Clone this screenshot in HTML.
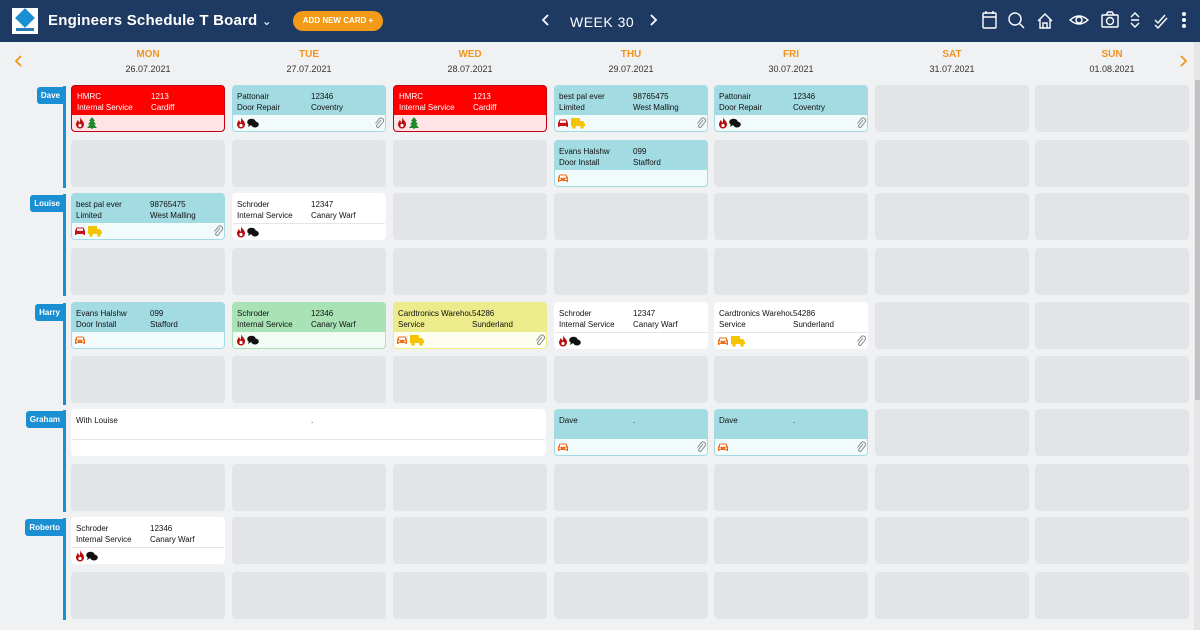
<!DOCTYPE html>
<html><head><meta charset="utf-8">
<style>
*{margin:0;padding:0;box-sizing:border-box}
body{width:1200px;height:630px;overflow:hidden;background:#f0f1f3;font-family:"Liberation Sans",sans-serif;position:relative}
.hdr{position:absolute;left:0;top:0;width:1200px;height:42px;background:#1f3a62}
.logo{position:absolute;left:12px;top:8px;width:26px;height:26px;background:#fff}
.title{position:absolute;left:48px;top:12px;color:#fff;font-weight:bold;font-size:15px;letter-spacing:.2px}
.add{position:absolute;left:293px;top:11px;width:90px;height:20px;border-radius:10px;background:#f39a16;color:#fff;font-size:8px;font-weight:bold;line-height:20px;text-align:center}
.week{position:absolute;left:570px;top:14px;color:#fff;font-size:14px;letter-spacing:.5px}
.day{position:absolute;top:49px;width:154px;text-align:center}
.day b{display:block;color:#f0941e;font-size:10px}
.day i{display:block;font-style:normal;color:#333;font-size:9px;margin-top:4px}
.cell{position:absolute;width:154px;height:47px;border-radius:4px;background:#e3e4e8}
.card{position:absolute;width:154px;height:47px;border-radius:4px;background:#fff;overflow:hidden;font-size:8px;color:#111}
.card .t{position:absolute;left:5px;top:6px;line-height:11px;width:74px;white-space:nowrap;overflow:hidden}
.card .n{position:absolute;left:79px;top:6px;line-height:11px}
.card .f{position:absolute;left:1px;right:1px;bottom:1px;height:16px;background:#fff;border-radius:0 0 3px 3px;border-top:1px solid #e5e5e5}
.red{background:#f00;color:#fff;border:1px solid #c40010}.red .t,.red .n{top:5px}.red .f{background:#ffe3e6;border:none;left:0;right:0;bottom:0}
.blue{background:#a3dbe3}.blue .f{background:#f2fbfc;border:none}
.green{background:#a9e3b5}.green .f{background:#f2fbf4;border:none}
.yel{background:#ecec8c}.yel .f{background:#fdfdf0;border:none}
.f svg{position:absolute;top:2px;width:12px;height:12px}
.tag{position:absolute;height:17px;background:#1a8fd3;color:#fff;font-size:8px;font-weight:bold;line-height:17px;border-radius:3px 0 0 3px;padding:0 4px;right:1136px}
.vl{position:absolute;left:63px;width:3px;background:#1a8fd3}
</style></head><body>
<svg width="0" height="0" style="position:absolute">
<defs>
<symbol id="fl" viewBox="0 0 12 12"><path d="M6 0C7 3 10 4 10 7.5A4 4 0 0 1 2 7.5C2 5.5 3.5 4.5 3.5 3C5 4 5 5 5 6C6 5 6.5 3 6 0Z" fill="#b80d0d"/><circle cx="6" cy="8.5" r="1.6" fill="#fff"/></symbol>
<symbol id="ch" viewBox="0 0 12 12"><ellipse cx="4.5" cy="5" rx="4.3" ry="3.3" fill="#111"/><ellipse cx="8" cy="7.5" rx="3.8" ry="3" fill="#111"/><path d="M2 7L1 10L4 8Z" fill="#111"/></symbol>
<symbol id="tr" viewBox="0 0 12 12"><path d="M6 0L9 4H7.5L10 7.5H8L11 11H1L4 7.5H2L4.5 4H3Z" fill="#1c8a2c"/><rect x="5.3" y="10" width="1.4" height="2" fill="#1c8a2c"/></symbol>
<symbol id="ca" viewBox="0 0 12 12"><path d="M1 6L2.5 2.5H9.5L11 6V10H9.5V9H2.5V10H1Z" fill="#f06b1c"/><rect x="3" y="3.5" width="6" height="2.3" fill="#fff"/><circle cx="3" cy="7.3" r=".9" fill="#fff"/><circle cx="9" cy="7.3" r=".9" fill="#fff"/></symbol>
<symbol id="car" viewBox="0 0 12 12"><path d="M1 6L2.5 2.5H9.5L11 6V10H9.5V9H2.5V10H1Z" fill="#c8111b"/><rect x="3" y="3.5" width="6" height="2.3" fill="#fff"/></symbol>
<symbol id="tk" viewBox="0 0 14 12"><rect x="0" y="1" width="9" height="8" fill="#f5c400"/><path d="M9 4H12L14 7V9H9Z" fill="#f5c400"/><circle cx="3" cy="10" r="1.7" fill="#f5c400"/><circle cx="11" cy="10" r="1.7" fill="#f5c400"/></symbol>
<symbol id="cl" viewBox="0 0 12 12"><path d="M8 3L4 8A1.3 1.3 0 0 0 6 10L10 5A2.5 2.5 0 0 0 6.5 1.5L2.5 6.5" fill="none" stroke="#888" stroke-width="1"/></symbol>
</defs></svg>

<div class="hdr">
<div class="logo"><svg width="26" height="26"><rect x="6" y="3" width="14" height="14" transform="rotate(45 13 10)" fill="#1a8fd3"/><rect x="4" y="20" width="18" height="3" fill="#2a7ab8"/></svg></div>
<div class="title">Engineers Schedule T Board <span style="font-weight:normal;font-size:12px">&#8964;</span></div>
<div class="add">ADD NEW CARD +</div>
<svg style="position:absolute;left:541px;top:13px" width="10" height="14"><path d="M7 2L2 7L7 12" fill="none" stroke="#fff" stroke-width="1.8"/></svg>
<div class="week">WEEK 30</div>
<svg style="position:absolute;left:648px;top:13px" width="10" height="14"><path d="M3 2L8 7L3 12" fill="none" stroke="#fff" stroke-width="1.8"/></svg>
<svg style="position:absolute;left:980px;top:10px" width="220" height="22" fill="none" stroke="#fff" stroke-width="1.4">
<rect x="3" y="3" width="13" height="15" rx="1"/><path d="M3 7H16M6 1V4M13 1V4"/>
<circle cx="35" cy="9" r="6"/><path d="M39.5 13.5L44 18"/>
<path d="M58 11L65 4L72 11M60 9V18H70V9M63 18V13H67V18"/>
<path d="M90 10Q99 2 108 10Q99 18 90 10Z"/><circle cx="99" cy="10" r="3"/>
<rect x="122" y="5" width="16" height="12" rx="1"/><circle cx="130" cy="11" r="3.5"/><path d="M126 5L128 2H132L134 5"/>
<path d="M151 7L155 3L159 7M151 13L155 17L159 13M151 10H159"/>
<path d="M175 10L178 13L185 5M175 15L178 18L187 8"/>
<circle cx="204" cy="4" r="1.3" fill="#fff"/><circle cx="204" cy="10" r="1.3" fill="#fff"/><circle cx="204" cy="16" r="1.3" fill="#fff"/>
</svg>
</div>

<svg style="position:absolute;left:14px;top:54px" width="10" height="14"><path d="M7 2L2 7L7 12" fill="none" stroke="#f0941e" stroke-width="1.8"/></svg>
<svg style="position:absolute;left:1178px;top:54px" width="10" height="14"><path d="M3 2L8 7L3 12" fill="none" stroke="#f0941e" stroke-width="1.8"/></svg>
<div style="position:absolute;left:1194px;top:42px;width:6px;height:588px;background:#e6e6e6"></div>
<div style="position:absolute;left:1195px;top:80px;width:5px;height:320px;background:#c1c1c1"></div>

<div class="day" style="left:71px"><b>MON</b><i>26.07.2021</i></div>
<div class="day" style="left:232px"><b>TUE</b><i>27.07.2021</i></div>
<div class="day" style="left:393px"><b>WED</b><i>28.07.2021</i></div>
<div class="day" style="left:554px"><b>THU</b><i>29.07.2021</i></div>
<div class="day" style="left:714px"><b>FRI</b><i>30.07.2021</i></div>
<div class="day" style="left:875px"><b>SAT</b><i>31.07.2021</i></div>
<div class="day" style="left:1035px"><b>SUN</b><i>01.08.2021</i></div>

<div>
<div class="cell" style="left:71px;top:140px"></div><div class="cell" style="left:232px;top:140px"></div><div class="cell" style="left:393px;top:140px"></div><div class="cell" style="left:714px;top:140px"></div><div class="cell" style="left:875px;top:140px"></div><div class="cell" style="left:1035px;top:140px"></div>
<div class="cell" style="left:875px;top:85px"></div><div class="cell" style="left:1035px;top:85px"></div>
<div class="cell" style="left:393px;top:193px"></div><div class="cell" style="left:554px;top:193px"></div><div class="cell" style="left:714px;top:193px"></div><div class="cell" style="left:875px;top:193px"></div><div class="cell" style="left:1035px;top:193px"></div>
<div class="cell" style="left:71px;top:248px"></div><div class="cell" style="left:232px;top:248px"></div><div class="cell" style="left:393px;top:248px"></div><div class="cell" style="left:554px;top:248px"></div><div class="cell" style="left:714px;top:248px"></div><div class="cell" style="left:875px;top:248px"></div><div class="cell" style="left:1035px;top:248px"></div>
<div class="cell" style="left:875px;top:302px"></div><div class="cell" style="left:1035px;top:302px"></div>
<div class="cell" style="left:71px;top:356px"></div><div class="cell" style="left:232px;top:356px"></div><div class="cell" style="left:393px;top:356px"></div><div class="cell" style="left:554px;top:356px"></div><div class="cell" style="left:714px;top:356px"></div><div class="cell" style="left:875px;top:356px"></div><div class="cell" style="left:1035px;top:356px"></div>
<div class="cell" style="left:875px;top:409px"></div><div class="cell" style="left:1035px;top:409px"></div>
<div class="cell" style="left:71px;top:464px"></div><div class="cell" style="left:232px;top:464px"></div><div class="cell" style="left:393px;top:464px"></div><div class="cell" style="left:554px;top:464px"></div><div class="cell" style="left:714px;top:464px"></div><div class="cell" style="left:875px;top:464px"></div><div class="cell" style="left:1035px;top:464px"></div>
<div class="cell" style="left:232px;top:517px"></div><div class="cell" style="left:393px;top:517px"></div><div class="cell" style="left:554px;top:517px"></div><div class="cell" style="left:714px;top:517px"></div><div class="cell" style="left:875px;top:517px"></div><div class="cell" style="left:1035px;top:517px"></div>
<div class="cell" style="left:71px;top:572px"></div><div class="cell" style="left:232px;top:572px"></div><div class="cell" style="left:393px;top:572px"></div><div class="cell" style="left:554px;top:572px"></div><div class="cell" style="left:714px;top:572px"></div><div class="cell" style="left:875px;top:572px"></div><div class="cell" style="left:1035px;top:572px"></div>
</div>

<div class="vl" style="top:86px;height:102px"></div><div class="tag" style="top:87px">Dave</div>
<div class="vl" style="top:194px;height:102px"></div><div class="tag" style="top:195px">Louise</div>
<div class="vl" style="top:303px;height:102px"></div><div class="tag" style="top:304px">Harry</div>
<div class="vl" style="top:410px;height:102px"></div><div class="tag" style="top:411px">Graham</div>
<div class="vl" style="top:518px;height:102px"></div><div class="tag" style="top:519px">Roberto</div>

<div class="card red" style="left:71px;top:85px"><div class="t">HMRC<br>Internal Service</div><div class="n">1213<br>Cardiff</div><div class="f"><svg style="left:2px"><use href="#fl"/></svg><svg style="left:14px"><use href="#tr"/></svg></div></div>
<div class="card blue" style="left:232px;top:85px"><div class="t">Pattonair<br>Door Repair</div><div class="n">12346<br>Coventry</div><div class="f"><svg style="left:2px"><use href="#fl"/></svg><svg style="left:14px"><use href="#ch"/></svg><svg style="left:140px"><use href="#cl"/></svg></div></div>
<div class="card red" style="left:393px;top:85px"><div class="t">HMRC<br>Internal Service</div><div class="n">1213<br>Cardiff</div><div class="f"><svg style="left:2px"><use href="#fl"/></svg><svg style="left:14px"><use href="#tr"/></svg></div></div>
<div class="card blue" style="left:554px;top:85px"><div class="t">best pal ever<br>Limited</div><div class="n">98765475<br>West Malling</div><div class="f"><svg style="left:2px"><use href="#car"/></svg><svg style="left:16px;width:14px"><use href="#tk"/></svg><svg style="left:140px"><use href="#cl"/></svg></div></div>
<div class="card blue" style="left:714px;top:85px"><div class="t">Pattonair<br>Door Repair</div><div class="n">12346<br>Coventry</div><div class="f"><svg style="left:2px"><use href="#fl"/></svg><svg style="left:14px"><use href="#ch"/></svg><svg style="left:140px"><use href="#cl"/></svg></div></div>
<div class="card blue" style="left:554px;top:140px"><div class="t">Evans Halshw<br>Door Install</div><div class="n">099<br>Stafford</div><div class="f"><svg style="left:2px"><use href="#ca"/></svg></div></div>
<div class="card blue" style="left:71px;top:193px"><div class="t">best pal ever<br>Limited</div><div class="n">98765475<br>West Malling</div><div class="f"><svg style="left:2px"><use href="#car"/></svg><svg style="left:16px;width:14px"><use href="#tk"/></svg><svg style="left:140px"><use href="#cl"/></svg></div></div>
<div class="card" style="left:232px;top:193px"><div class="t">Schroder<br>Internal Service</div><div class="n">12347<br>Canary Warf</div><div class="f"><svg style="left:2px"><use href="#fl"/></svg><svg style="left:14px"><use href="#ch"/></svg></div></div>
<div class="card blue" style="left:71px;top:302px"><div class="t">Evans Halshw<br>Door Install</div><div class="n">099<br>Stafford</div><div class="f"><svg style="left:2px"><use href="#ca"/></svg></div></div>
<div class="card green" style="left:232px;top:302px"><div class="t">Schroder<br>Internal Service</div><div class="n">12346<br>Canary Warf</div><div class="f"><svg style="left:2px"><use href="#fl"/></svg><svg style="left:14px"><use href="#ch"/></svg></div></div>
<div class="card yel" style="left:393px;top:302px"><div class="t">Cardtronics Warehouse<br>Service</div><div class="n">54286<br>Sunderland</div><div class="f"><svg style="left:2px"><use href="#ca"/></svg><svg style="left:16px;width:14px"><use href="#tk"/></svg><svg style="left:140px"><use href="#cl"/></svg></div></div>
<div class="card" style="left:554px;top:302px"><div class="t">Schroder<br>Internal Service</div><div class="n">12347<br>Canary Warf</div><div class="f"><svg style="left:2px"><use href="#fl"/></svg><svg style="left:14px"><use href="#ch"/></svg></div></div>
<div class="card" style="left:714px;top:302px"><div class="t">Cardtronics Warehouse<br>Service</div><div class="n">54286<br>Sunderland</div><div class="f"><svg style="left:2px"><use href="#ca"/></svg><svg style="left:16px;width:14px"><use href="#tk"/></svg><svg style="left:140px"><use href="#cl"/></svg></div></div>
<div class="card" style="left:71px;top:409px;width:475px"><div class="t">With Louise</div><div class="n" style="left:240px">.</div><div class="f"></div></div>
<div class="card blue" style="left:554px;top:409px"><div class="t">Dave</div><div class="n">.</div><div class="f"><svg style="left:2px"><use href="#ca"/></svg><svg style="left:140px"><use href="#cl"/></svg></div></div>
<div class="card blue" style="left:714px;top:409px"><div class="t">Dave</div><div class="n">.</div><div class="f"><svg style="left:2px"><use href="#ca"/></svg><svg style="left:140px"><use href="#cl"/></svg></div></div>
<div class="card" style="left:71px;top:517px"><div class="t">Schroder<br>Internal Service</div><div class="n">12346<br>Canary Warf</div><div class="f"><svg style="left:2px"><use href="#fl"/></svg><svg style="left:14px"><use href="#ch"/></svg></div></div>
</body></html>
